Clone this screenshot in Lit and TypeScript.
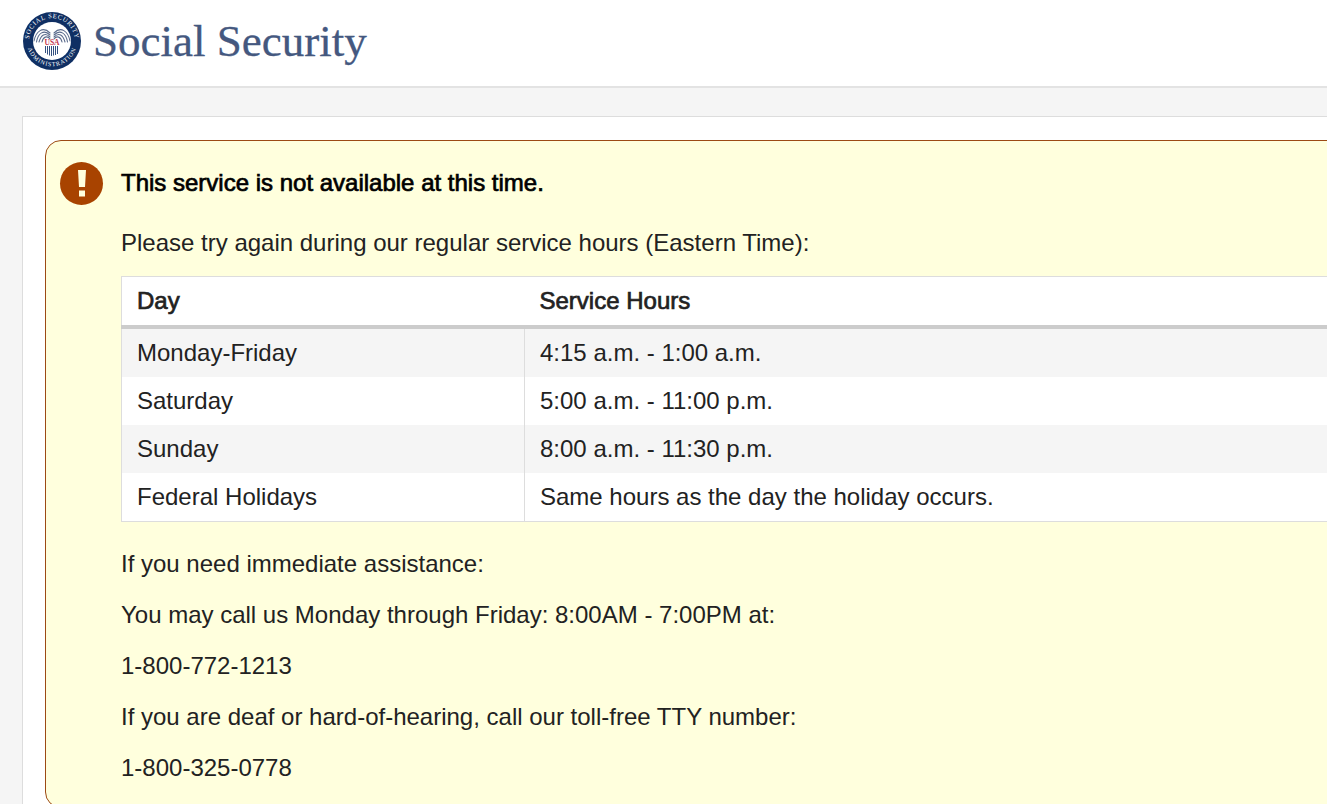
import { LitElement, html, css, svg } from "lit";
import { customElement } from "lit/decorators.js";

const rows = [
  ["Monday-Friday", "4:15 a.m. - 1:00 a.m."],
  ["Saturday", "5:00 a.m. - 11:00 p.m."],
  ["Sunday", "8:00 a.m. - 11:30 p.m."],
  ["Federal Holidays", "Same hours as the day the holiday occurs."],
];

const logo = svg`<svg class="logo" viewBox="0 0 58 58" width="58" height="58" aria-hidden="true">
  <defs>
    <path id="topArc" d="M7.2 36 A22.9 22.9 0 1 1 50.8 36"></path>
    <path id="botArc" d="M4.3 24 A25.2 25.2 0 1 0 53.7 24"></path>
  </defs>
  <circle cx="29" cy="29" r="29" fill="#0f2f63"></circle>
  <circle cx="29" cy="29" r="19" fill="#fff"></circle>
  <text class="ring top"><textPath href="#topArc" startOffset="50%" text-anchor="middle">SOCIAL SECURITY</textPath></text>
  <text class="ring bot"><textPath href="#botArc" startOffset="50%" text-anchor="middle">ADMINISTRATION</textPath></text>
  <g fill="none" stroke="#5b6c8d" stroke-width="1.1" stroke-linecap="round">
    <path d="M27 21 C20 14 13 19 11 29"></path>
    <path d="M27 23 C21 17 15 21 13.5 30"></path>
    <path d="M27 25 C22 20 18 23 16 30"></path>
    <path d="M27 27 C24 23 20 25 19 30"></path>
    <path d="M31 21 C38 14 45 19 47 29"></path>
    <path d="M31 23 C37 17 43 21 44.5 30"></path>
    <path d="M31 25 C36 20 40 23 42 30"></path>
    <path d="M31 27 C34 23 38 25 39 30"></path>
  </g>
  <text class="usa" x="29" y="32.5" text-anchor="middle">USA</text>
  <g stroke="#34507f" stroke-width="1">
    <path d="M22.5 34 V41"></path><path d="M24.5 34 V42.5"></path><path d="M26.5 34 V43.5"></path><path d="M28.5 34 V44"></path>
    <path d="M30.5 34 V43.5"></path><path d="M32.5 34 V43"></path><path d="M34.5 34 V42"></path>
  </g>
</svg>`;

@customElement("app-root")
export class AppRoot extends LitElement {
  static styles = css`
    :host {
      display: block;
      width: 100vw;
      height: 100vh;
      overflow: hidden;
      background: #f5f5f5;
      font-family: "Liberation Sans", Arial, sans-serif;
      color: #222;
    }
    .header {
      display: flex;
      align-items: center;
      box-sizing: border-box;
      height: 88px;
      padding: 0 0 4px 23px;
      gap: 12px;
      background: #fff;
      border-bottom: 2px solid #e3e3e3;
    }
    .logo { flex: none; display: block; }
    .ring { font-family: "Liberation Serif", serif; fill: #fff; }
    .top { font-size: 6.6px; letter-spacing: 0.7px; }
    .bot { font-size: 6px; letter-spacing: 0.9px; }
    .usa { font-family: "Liberation Serif", serif; font-size: 7.5px; font-weight: 700; fill: #c5324a; }
    .brand {
      font-family: "Liberation Serif", serif;
      font-size: 45px;
      line-height: 1;
      color: #44587f;
      -webkit-text-stroke: 0.3px #44587f;
      white-space: nowrap;
    }
    .card {
      box-sizing: border-box;
      width: 1500px;
      margin: 28px 0 0 22px;
      padding: 23px 22px 0;
      background: #fff;
      border: 1px solid #ddd;
    }
    .alert {
      box-sizing: border-box;
      display: flex;
      gap: 18px;
      height: 668px;
      padding: 21px 14px 0;
      background: #ffd;
      border: 1px solid #9c4a14;
      border-radius: 16px;
    }
    .icon {
      flex: none;
      display: flex;
      align-items: center;
      justify-content: center;
      width: 43px;
      height: 43px;
      border-radius: 50%;
      background: #a84300;
    }
    .body { flex: 1; min-width: 0; font-size: 24px; line-height: 34px; }
    .title {
      margin: -1px 0 22px;
      font-size: 24px;
      font-weight: 400;
      color: #000;
      line-height: 43px;
      -webkit-text-stroke: 0.7px #000;
    }
    p { margin: 0 0 17px; }
    .lead { margin-bottom: 16px; }
    table {
      width: 100%;
      border-collapse: collapse;
      table-layout: fixed;
      margin: 0 0 25px;
      background: #fff;
      border: 1px solid #ddd;
    }
    th, td { padding: 7px 15px; text-align: left; line-height: 34px; }
    th { font-weight: 400; -webkit-text-stroke: 0.7px #222; border-bottom: 4px solid #ccc; }
    td { border-left: 1px solid #ddd; }
    td:first-child { border-left: 0; }
    tbody tr:nth-child(odd) td { background: #f5f5f5; }
    .c1 { width: 403px; }
  `;

  render() {
    return html`
      <header class="header">${logo}<span class="brand">Social Security</span></header>
      <main class="card">
        <section class="alert">
          <div class="icon">
            <svg width="8" height="27" viewBox="0 0 8 27" aria-hidden="true">
              <path d="M0 0 H8 L7 17 H1 Z M1 20.5 H7 V26.5 H1 Z" fill="#ffd"></path>
            </svg>
          </div>
          <div class="body">
            <h1 class="title">This service is not available at this time.</h1>
            <p class="lead">Please try again during our regular service hours (Eastern Time):</p>
            <table>
              <colgroup><col class="c1" /><col /></colgroup>
              <thead><tr><th>Day</th><th>Service Hours</th></tr></thead>
              <tbody>
                ${rows.map((r) => html`<tr><td>${r[0]}</td><td>${r[1]}</td></tr>`)}
              </tbody>
            </table>
            <p>If you need immediate assistance:</p>
            <p>You may call us Monday through Friday: 8:00AM - 7:00PM at:</p>
            <p>1-800-772-1213</p>
            <p>If you are deaf or hard-of-hearing, call our toll-free TTY number:</p>
            <p>1-800-325-0778</p>
          </div>
        </section>
      </main>
    `;
  }
}
